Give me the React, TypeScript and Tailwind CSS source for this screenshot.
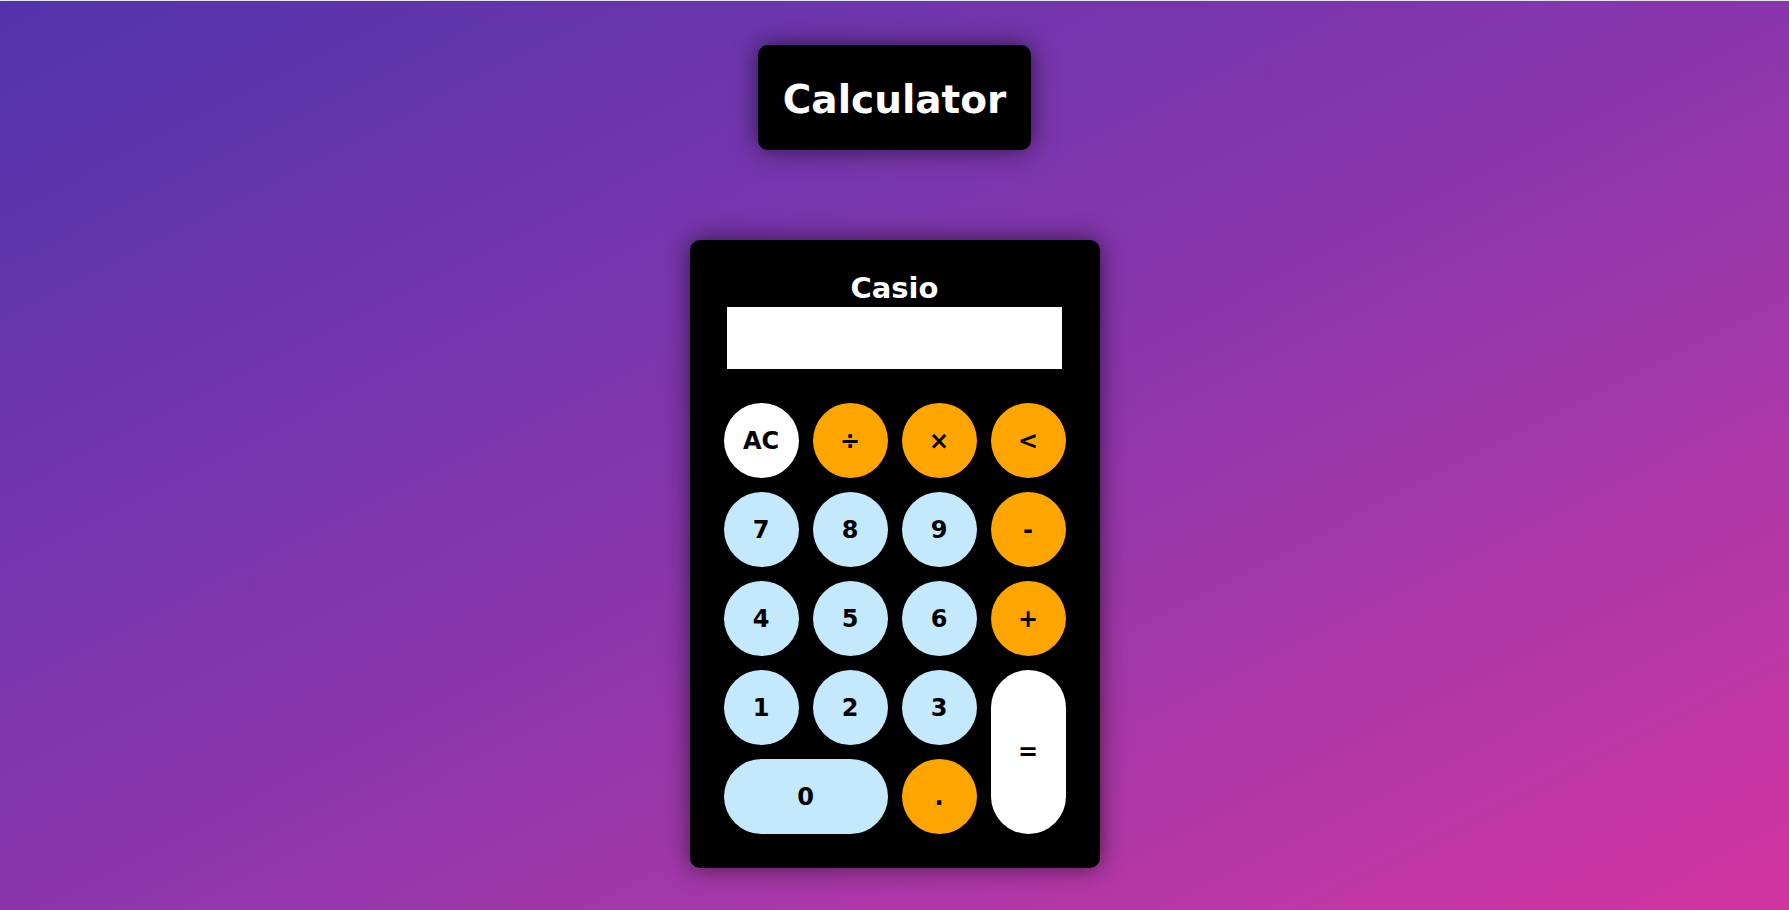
import React, { useState } from 'react';

const KEYS: { label: string; kind: 'white' | 'orange' | 'blue'; span?: string }[] = [
  { label: 'AC', kind: 'white' },
  { label: '÷', kind: 'orange' },
  { label: '×', kind: 'orange' },
  { label: '<', kind: 'orange' },
  { label: '7', kind: 'blue' },
  { label: '8', kind: 'blue' },
  { label: '9', kind: 'blue' },
  { label: '-', kind: 'orange' },
  { label: '4', kind: 'blue' },
  { label: '5', kind: 'blue' },
  { label: '6', kind: 'blue' },
  { label: '+', kind: 'orange' },
  { label: '1', kind: 'blue' },
  { label: '2', kind: 'blue' },
  { label: '3', kind: 'blue' },
  { label: '=', kind: 'white', span: 'row-span-2' },
  { label: '0', kind: 'blue', span: 'col-span-2' },
  { label: '.', kind: 'orange' },
];

const COLORS = {
  white: 'bg-white',
  orange: 'bg-[#ffa500]',
  blue: 'bg-[#c4e9fc]',
};

export default function App() {
  const [value, setValue] = useState('');

  const press = (key: string) => {
    if (key === 'AC') return setValue('');
    if (key === '<') return setValue((v) => v.slice(0, -1));
    if (key === '=') {
      try {
        const expr = value.replace(/÷/g, '/').replace(/×/g, '*');
        // eslint-disable-next-line no-new-func
        setValue(String(Function(`return (${expr})`)()));
      } catch {
        setValue('Error');
      }
      return;
    }
    setValue((v) => v + key);
  };

  return (
    <div
      className="min-h-[910px] w-full border-t border-[#e4e4e4] bg-gradient-to-br from-[#5233ab] via-[#8a35ad] to-[#d233a1] flex flex-col items-center pt-[44px]"
      style={{ fontFamily: '"Arial Black", "DejaVu Sans", sans-serif' }}
    >
      <div className="h-[105px] px-[25px] pt-1 flex items-center bg-black rounded-[10px] shadow-[0_0_24px_rgba(0,0,0,0.6)]">
        <h1 className="text-[39px] leading-none font-bold text-white">Calculator</h1>
      </div>

      <div className="mt-[90px] w-[410px] bg-black rounded-[10px] pt-[34px] pb-[34px] shadow-[0_0_24px_rgba(0,0,0,0.6)] flex flex-col items-center">
        <h2 className="text-[29px] leading-none font-bold text-white">Casio</h2>
        <input
          readOnly
          value={value}
          className="mt-1 w-[335px] h-[62px] bg-white text-right px-3 text-2xl font-bold text-black outline-none"
        />
        <div className="mt-[34px] grid grid-cols-[repeat(4,75px)] auto-rows-[75px] gap-[14px]">
          {KEYS.map((k) => (
            <button
              key={k.label}
              onClick={() => press(k.label)}
              className={`${COLORS[k.kind]} ${k.span ?? ''} rounded-full flex items-center justify-center text-[24px] font-bold text-black`}
            >
              {k.label}
            </button>
          ))}
        </div>
      </div>
    </div>
  );
}
